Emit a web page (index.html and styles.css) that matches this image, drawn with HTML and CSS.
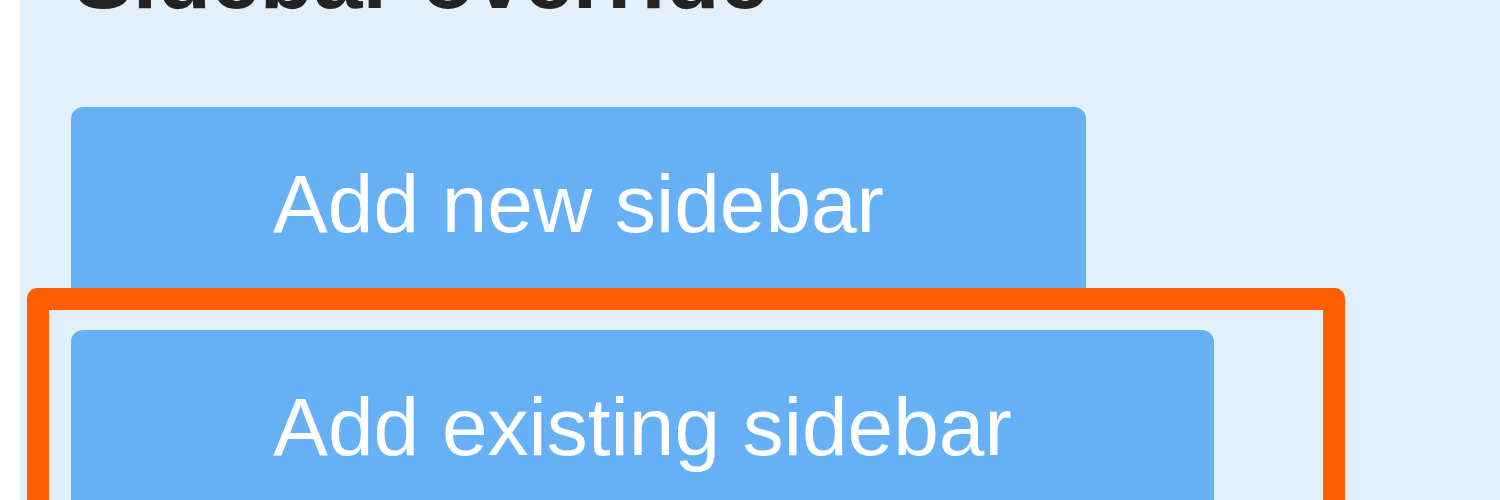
FILE: index.html
```html
<!DOCTYPE html>
<html lang="en">
<head>
<meta charset="utf-8">
<title>Sidebar override</title>
<link rel="stylesheet" href="styles.css">
</head>
<body>
<main class="panel">
  <h1 class="title">Sidebar override</h1>
  <button class="btn btn-new" type="button">Add new sidebar</button>
  <div class="highlight">
    <button class="btn btn-existing" type="button">Add existing sidebar</button>
  </div>
</main>
</body>
</html>
```

FILE: styles.css
```css
html, body {
  margin: 0;
  padding: 0;
  background: #ffffff;
  height: 100%;
  overflow: hidden;
}

body {
  font-family: "Liberation Sans", Arial, Helvetica, sans-serif;
}

.panel {
  margin-left: 20px;
  min-height: 100%;
  background: #e2f0fc;
  padding: 0 0 0 51px;
  display: flex;
  flex-direction: column;
  align-items: flex-start;
}

.title {
  margin: -66px 0 0 3px;
  font-size: 88px;
  line-height: 88px;
  font-weight: 700;
  color: #232323;
  white-space: nowrap;
}

.btn {
  flex: none;
  display: flex;
  align-items: center;
  justify-content: center;
  height: 194px;
  border: 0;
  border-radius: 12px;
  background: #66b0f5;
  color: #ffffff;
  font-family: "Liberation Sans", Arial, Helvetica, sans-serif;
  font-size: 82px;
  line-height: 1;
  padding: 0;
}

.btn-new {
  margin-top: 85px;
  width: 1015px;
}

.highlight {
  position: relative;
  z-index: 1;
  margin: -13px 0 0 -44px;
  width: 1252px;
  border: 22px solid #ff5f00;
  border-radius: 10px;
  padding: 20px 0 0 22px;
}

.btn-existing {
  width: 1143px;
}
```
